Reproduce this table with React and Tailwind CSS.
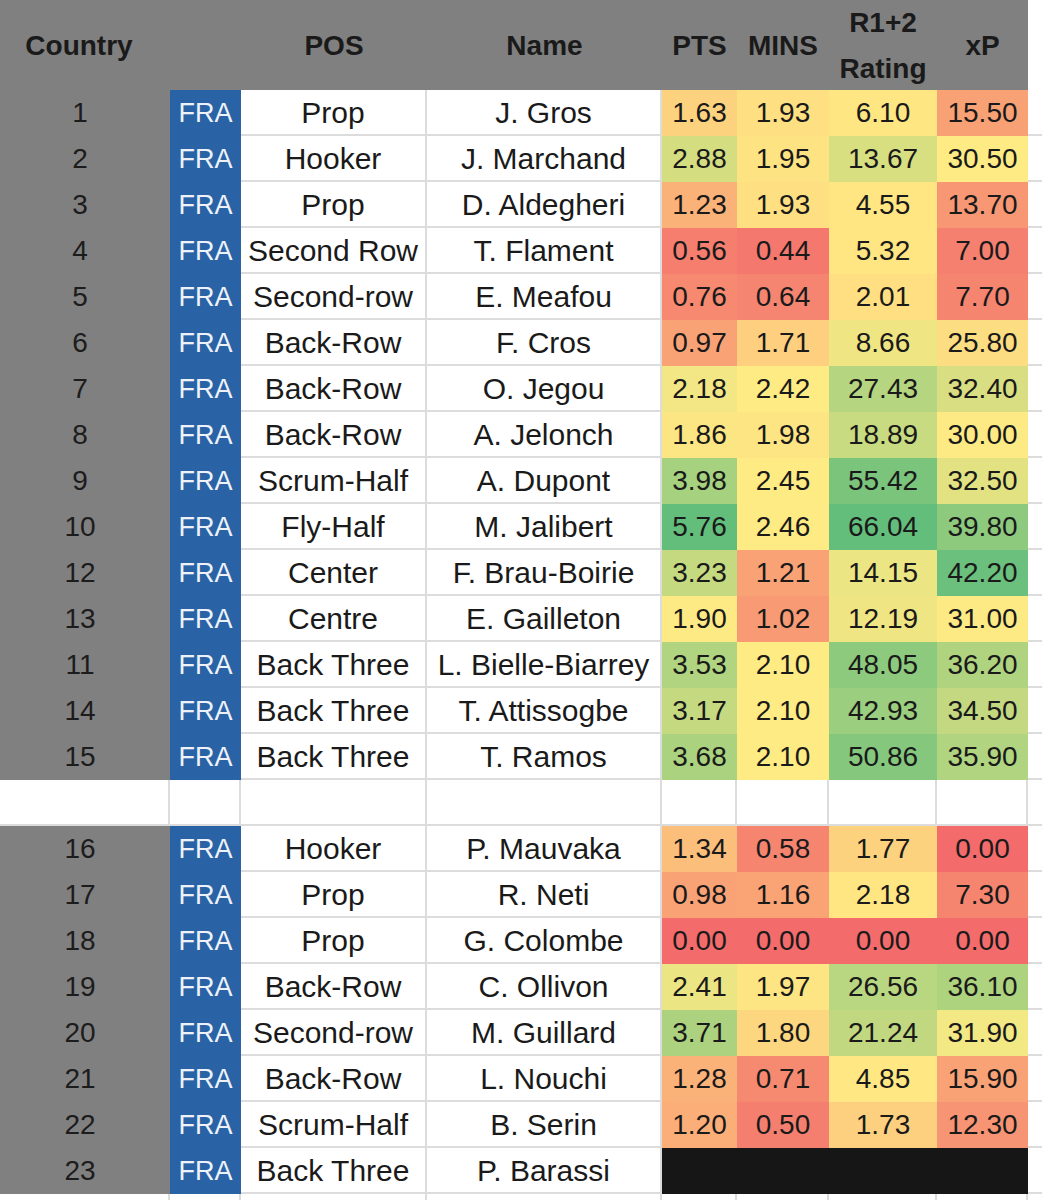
const starters = [
  ["1", "Prop", "J. Gros", [["1.63", "#FDD27F"], ["1.93", "#FEE082"], ["6.10", "#FEE683"], ["15.50", "#F8A175"]]],
  ["2", "Hooker", "J. Marchand", [["2.88", "#D5DD81"], ["1.95", "#FEE382"], ["13.67", "#D8DF81"], ["30.50", "#FEEB84"]]],
  ["3", "Prop", "D. Aldegheri", [["1.23", "#FBB278"], ["1.93", "#FEE082"], ["4.55", "#FFE683"], ["13.70", "#F79773"]]],
  ["4", "Second Row", "T. Flament", [["0.56", "#F57E6F"], ["0.44", "#F5786E"], ["5.32", "#FFE683"], ["7.00", "#F6806F"]]],
  ["5", "Second-row", "E. Meafou", [["0.76", "#F6896F"], ["0.64", "#F58570"], ["2.01", "#FFDF82"], ["7.70", "#F68570"]]],
  ["6", "Back-Row", "F. Cros", [["0.97", "#F9A276"], ["1.71", "#FDCF7F"], ["8.66", "#EFE683"], ["25.80", "#FDDD81"]]],
  ["7", "Back-Row", "O. Jegou", [["2.18", "#F2E784"], ["2.42", "#FFEB84"], ["27.43", "#B5D580"], ["32.40", "#D8DE81"]]],
  ["8", "Back-Row", "A. Jelonch", [["1.86", "#FCE583"], ["1.98", "#FEE583"], ["18.89", "#C9DB80"], ["30.00", "#FEEA84"]]],
  ["9", "Scrum-Half", "A. Dupont", [["3.98", "#A6D17F"], ["2.45", "#FFEB84"], ["55.42", "#7BC47C"], ["32.50", "#E3E283"]]],
  ["10", "Fly-Half", "M. Jalibert", [["5.76", "#63BE7B"], ["2.46", "#FFEB84"], ["66.04", "#63BE7B"], ["39.80", "#8DCA7E"]]],
  ["12", "Center", "F. Brau-Boirie", [["3.23", "#C5DA80"], ["1.21", "#F9A276"], ["14.15", "#EBE583"], ["42.20", "#6AC07C"]]],
  ["13", "Centre", "E. Gailleton", [["1.90", "#FEEA84"], ["1.02", "#F89A74"], ["12.19", "#EFE683"], ["31.00", "#FDEA84"]]],
  ["11", "Back Three", "L. Bielle-Biarrey", [["3.53", "#B0D47F"], ["2.10", "#FFEB84"], ["48.05", "#8DCA7E"], ["36.20", "#AFD37F"]]],
  ["14", "Back Three", "T. Attissogbe", [["3.17", "#C4D980"], ["2.10", "#FFEB84"], ["42.93", "#9BCE7E"], ["34.50", "#C3D880"]]],
  ["15", "Back Three", "T. Ramos", [["3.68", "#ABD27F"], ["2.10", "#FFEB84"], ["50.86", "#84C77D"], ["35.90", "#B0D47F"]]],
];

const bench = [
  ["16", "Hooker", "P. Mauvaka", [["1.34", "#FCBF7B"], ["0.58", "#F68570"], ["1.77", "#FDD27F"], ["0.00", "#F36B6B"]]],
  ["17", "Prop", "R. Neti", [["0.98", "#F9A275"], ["1.16", "#FAA476"], ["2.18", "#FFE683"], ["7.30", "#F68570"]]],
  ["18", "Prop", "G. Colombe", [["0.00", "#F36B6B"], ["0.00", "#F36B6B"], ["0.00", "#F36B6B"], ["0.00", "#F36B6B"]]],
  ["19", "Back-Row", "C. Ollivon", [["2.41", "#EBE583"], ["1.97", "#FEE583"], ["26.56", "#B9D680"], ["36.10", "#ADD37F"]]],
  ["20", "Second-row", "M. Guillard", [["3.71", "#ACD27F"], ["1.80", "#FDD780"], ["21.24", "#C1D880"], ["31.90", "#F2E884"]]],
  ["21", "Back-Row", "L. Nouchi", [["1.28", "#FBB279"], ["0.71", "#F68A70"], ["4.85", "#FFE883"], ["15.90", "#F9A276"]]],
  ["22", "Scrum-Half", "B. Serin", [["1.20", "#FBAE78"], ["0.50", "#F57F6F"], ["1.73", "#FDD07F"], ["12.30", "#F79473"]]],
  ["23", "Back Three", "P. Barassi", null],
];

const grid = "grid grid-cols-[170px_71px_186px_235px_75px_92px_108px_91px_14px]";
const white = "h-[46px] flex items-center justify-center border-b-2 border-r-2 border-[#dcdcdc] bg-white";

function PlayerRow({ row }) {
  const [num, pos, name, stats] = row;
  return (
    <div className={grid}>
      <div className="h-[46px] flex items-center justify-center pr-[10px] bg-[#808080] text-[28px] text-[#1c1c1c]">{num}</div>
      <div className="h-[46px] flex items-center justify-center bg-[#2a62a6] text-[27px] text-[#eef2f8]">FRA</div>
      <div className={`${white} text-[30px]`}>{pos}</div>
      <div className={`${white} text-[30px]`}>{name}</div>
      {stats ? (
        stats.map(([v, c], i) => (
          <div key={i} className="h-[46px] flex items-center justify-center text-[28px]" style={{ backgroundColor: c }}>
            {v}
          </div>
        ))
      ) : (
        <div className="col-span-4 h-[46px] bg-[#161616]"></div>
      )}
      <div className="h-[46px] border-b-2 border-[#dcdcdc] bg-white"></div>
    </div>
  );
}

export default function App() {
  return (
    <div className="w-[1042px] h-[1200px] overflow-hidden bg-white text-[#1a1a1a] font-['Liberation_Sans',Arial,sans-serif]">
      {/* header */}
      <div className={`${grid} h-[90px] font-bold text-[28px]`}>
        <div className="bg-[#808080] flex items-center justify-center pr-[12px]">Country</div>
        <div className="bg-[#808080]"></div>
        <div className="bg-[#808080] flex items-center justify-center">POS</div>
        <div className="bg-[#808080] flex items-center justify-center">Name</div>
        <div className="bg-[#808080] flex items-center justify-center">PTS</div>
        <div className="bg-[#808080] flex items-center justify-center">MINS</div>
        <div className="bg-[#808080] flex flex-col items-center justify-center leading-[46px]">
          <span>R1+2</span>
          <span>Rating</span>
        </div>
        <div className="bg-[#808080] flex items-center justify-center">xP</div>
        <div className="bg-white"></div>
      </div>

      {starters.map((r) => (
        <PlayerRow key={r[0]} row={r} />
      ))}

      {/* spacer row */}
      <div className={grid}>
        {Array.from({ length: 8 }).map((_, i) => (
          <div key={i} className={white}></div>
        ))}
        <div className="h-[46px] border-b-2 border-[#dcdcdc] bg-white"></div>
      </div>

      {bench.map((r) => (
        <PlayerRow key={r[0]} row={r} />
      ))}

      <div className={grid}>
        {Array.from({ length: 8 }).map((_, i) => (
          <div key={i} className="h-[6px] border-r-2 border-[#dcdcdc]"></div>
        ))}
        <div className="h-[6px]"></div>
      </div>
    </div>
  );
}
